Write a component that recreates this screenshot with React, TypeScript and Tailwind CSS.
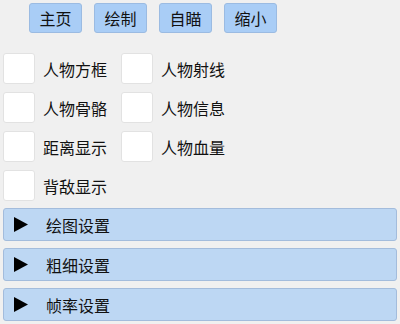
import React, { useState } from 'react';

const TABS = ['主页', '绘制', '自瞄', '缩小'];

const OPTIONS = [
  ['人物方框', '人物射线'],
  ['人物骨骼', '人物信息'],
  ['距离显示', '人物血量'],
  ['背敌显示'],
];

const SECTIONS = ['绘图设置', '粗细设置', '帧率设置'];

const Check: React.FC<{ label: string; checked: boolean; onToggle: () => void }> = ({ label, checked, onToggle }) => (
  <button onClick={onToggle} className="flex items-center gap-[8px] w-[118px] text-left">
    <span className="w-[32px] h-[31px] shrink-0 rounded-[3px] bg-white border border-[#e2e2e2] flex items-center justify-center text-[#2a6fd6] text-sm">
      {checked ? '✓' : ''}
    </span>
    <span className="text-[16px] text-[#111] whitespace-nowrap">{label}</span>
  </button>
);

export default function App() {
  const [checked, setChecked] = useState<Record<string, boolean>>({});
  const [open, setOpen] = useState<string | null>(null);

  return (
    <div className="w-[400px] h-[324px] bg-[#f0f0f0] overflow-hidden" style={{ fontFamily: '"Noto Sans CJK SC", "Noto Sans", sans-serif' }}>
      <div className="flex gap-[12px] pl-[29px] pt-[3px]">
        {TABS.map((t) => (
          <button key={t} className="w-[53px] h-[30px] rounded-[3px] bg-[#a9cdf6] border border-[#9bbbe2] text-[16px] text-[#111] flex items-center justify-center">
            {t}
          </button>
        ))}
      </div>

      <div className="flex flex-col gap-[8px] pl-[3px] mt-[20px]">
        {OPTIONS.map((row, i) => (
          <div key={i} className="flex">
            {row.map((label) => (
              <Check
                key={label}
                label={label}
                checked={!!checked[label]}
                onToggle={() => setChecked((c) => ({ ...c, [label]: !c[label] }))}
              />
            ))}
          </div>
        ))}
      </div>

      <div className="flex flex-col gap-[7px] px-[3px] mt-[7px]">
        {SECTIONS.map((s) => (
          <button
            key={s}
            onClick={() => setOpen(open === s ? null : s)}
            className="h-[33px] w-full rounded-[3px] bg-[#bdd7f3] border border-[#a3bcdc] flex items-center text-left"
          >
            <svg width="14" height="15" viewBox="0 0 14 15" className="ml-[10px]">
              <path d="M0 0 L14 7.5 L0 15 Z" fill="#000" />
            </svg>
            <span className="ml-[18px] text-[16px] text-[#111]">{s}</span>
          </button>
        ))}
      </div>
    </div>
  );
}
